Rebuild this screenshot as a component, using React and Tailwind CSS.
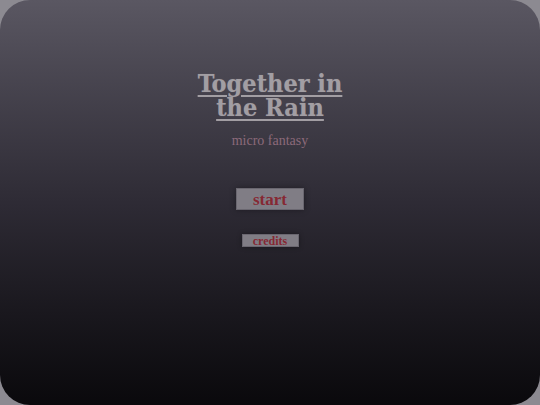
export default function App() {
  return (
    <div className="w-[540px] h-[405px] bg-[#8c8a91]">
      <div className="w-full h-full rounded-[30px] bg-gradient-to-b from-[#5a5762] via-[#2e2b35] to-[#0a090c] flex flex-col items-center pt-[72px] font-['Liberation_Serif',serif]">
        <h1 className="text-center font-['DejaVu_Serif_Condensed','DejaVu_Serif',serif] text-[25px] leading-[24px] font-bold underline underline-offset-[3px] decoration-2 text-[#a29ea3] tracking-[0px] [text-shadow:0_0_1px_rgba(200,195,200,0.3)]">
          Together in
          <br />
          the Rain
        </h1>
        <p className="mt-[11px] text-[14px] leading-[20px] text-[#8c6a7a]">
          micro fantasy
        </p>
        <button className="mt-[37px] w-[68px] h-[22px] bg-[#807d85] border border-[#6a6770] shadow-[0_0_6px_rgba(0,0,0,0.35)] text-[#862833] font-bold text-[17px] leading-none">
          start
        </button>
        <button className="mt-[24px] w-[57px] h-[13px] bg-[#807d85] border border-[#6a6770] shadow-[0_0_5px_rgba(0,0,0,0.35)] text-[#862833] font-bold text-[12px] leading-none">
          credits
        </button>
      </div>
    </div>
  );
}
